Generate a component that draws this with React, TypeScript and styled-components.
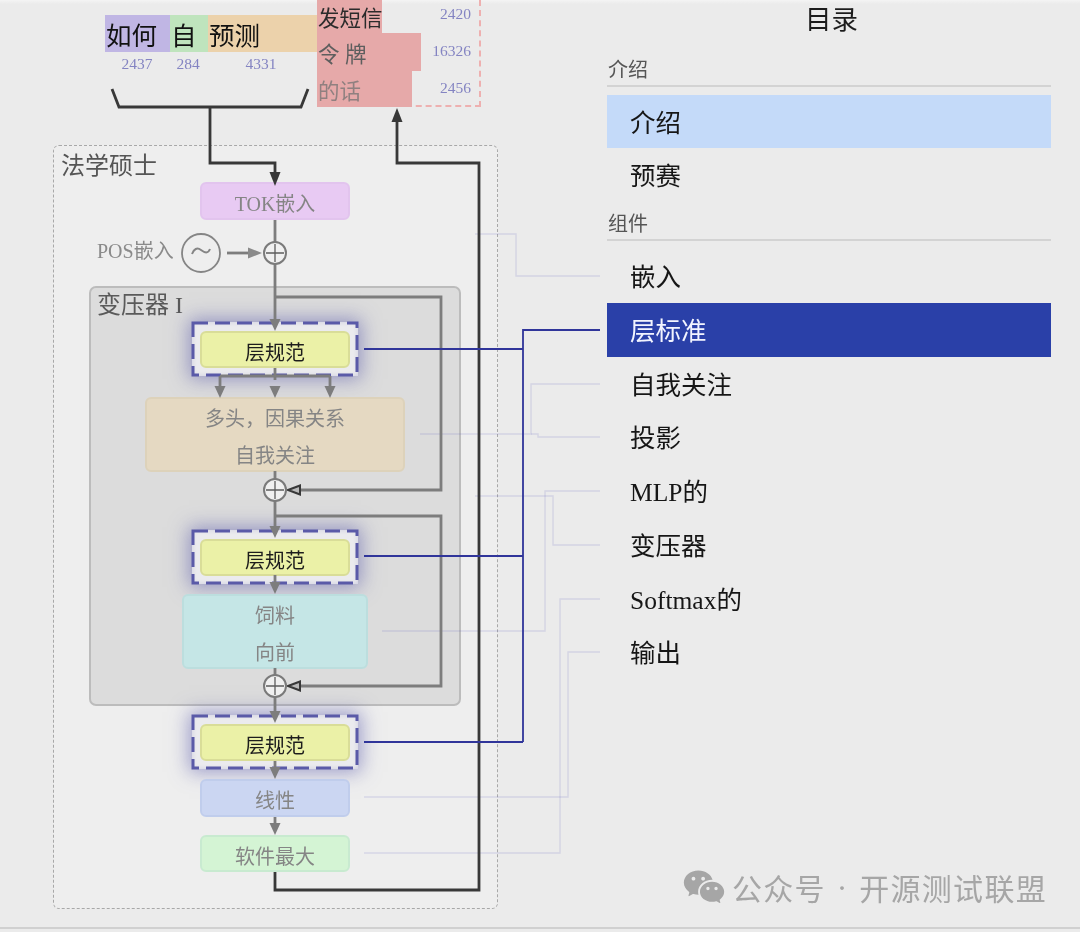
import React from "react";
import styled, { createGlobalStyle } from "styled-components";
import { RiWechatFill } from "react-icons/ri";

const SERIF = `"Liberation Serif", "Noto Sans CJK SC", serif`;

const Global = createGlobalStyle`
  html, body { margin: 0; padding: 0; background: #ebebeb; }
  #root { width: 1080px; height: 932px; overflow: hidden; }
`;

const Page = styled.div`
  position: relative;
  display: flex;
  width: 1080px;
  height: 932px;
  box-sizing: border-box;
  background: #ebebeb;
  font-family: ${SERIF};
  overflow: hidden;
  filter: blur(0.5px);

  &::before {
    content: "";
    position: absolute;
    left: 0;
    right: 0;
    top: 0;
    height: 4px;
    background: linear-gradient(#f4f4f4, #ebebeb);
  }

  &::after {
    content: "";
    position: absolute;
    left: 0;
    right: 0;
    top: 927px;
    height: 2px;
    background: #d0d0d0;
  }
`;

const Canvas = styled.div`
  position: relative;
  flex: 0 0 607px;
  height: 928px;
`;

const Frame = styled.div<{ $x: number; $y: number; $w: number; $h: number }>`
  position: absolute;
  left: ${(p) => p.$x}px;
  top: ${(p) => p.$y}px;
  width: ${(p) => p.$w}px;
  height: ${(p) => p.$h}px;
  box-sizing: border-box;
`;

const LlmFrame = styled(Frame)`
  background: #eeeeee;
  border: 1px dashed #a8a8a8;
  border-radius: 6px;
  padding: 6px 7px;
  font-size: 24px;
  line-height: 29px;
  color: #555;
`;

const TransformerFrame = styled(Frame)`
  background: #dcdcdc;
  border: 2px solid #bcbcbc;
  border-radius: 7px;
  padding: 2px 6px;
  font-size: 24px;
  line-height: 30px;
  color: #5a5a5a;
`;

const Glow = styled(Frame)`
  background: #ebebee;
  box-shadow: 0 0 18px 3px rgba(85, 85, 170, 0.55), inset 0 0 5px rgba(85, 85, 170, 0.2);
`;

const Block = styled(Frame)<{ $bg: string; $line: string; $ink?: string }>`
  display: flex;
  flex-direction: column;
  align-items: center;
  justify-content: center;
  padding-top: 7px;
  background: ${(p) => p.$bg};
  border: 2px solid ${(p) => p.$line};
  border-radius: 6px;
  color: ${(p) => p.$ink ?? "#858585"};
  font-size: 20px;
  line-height: 37px;
`;

const TokenRow = styled.div`
  position: absolute;
  left: 105px;
  top: 15px;
  display: flex;
`;

const Token = styled.div<{ $w: number; $bg: string }>`
  width: ${(p) => p.$w}px;
  height: 37px;
  padding: 4px 0 0 1px;
  box-sizing: border-box;
  background: ${(p) => p.$bg};
  color: #111;
  font-size: 25.5px;
  line-height: 36px;
  white-space: nowrap;
`;

const TokenCount = styled.div<{ $x: number }>`
  position: absolute;
  left: ${(p) => p.$x - 30}px;
  top: 55px;
  width: 60px;
  text-align: center;
  font-size: 15.5px;
  line-height: 18px;
  color: #8484c2;
`;

const Output = styled.div`
  position: absolute;
  left: 317px;
  top: 0;
  width: 164px;
  height: 107px;
  box-sizing: border-box;
  border-right: 2px dashed #eeb0b0;
  border-bottom: 2px dashed #eeb0b0;
  display: flex;
  flex-direction: column;
`;

const OutputRow = styled.div<{ $h: number; $w: number; $ink: string }>`
  position: relative;
  flex: none;
  height: ${(p) => p.$h}px;
  width: ${(p) => p.$w}px;
  padding-left: 1px;
  box-sizing: border-box;
  background: #e6a9a9;
  color: ${(p) => p.$ink};
  font-size: 21.5px;
  line-height: ${(p) => p.$h + 6}px;
  white-space: nowrap;
`;

const OutputCount = styled.span<{ $top: number }>`
  position: absolute;
  top: ${(p) => p.$top}px;
  left: 94px;
  width: 60px;
  text-align: right;
  font-size: 15.5px;
  line-height: 18px;
  color: #8484c2;
`;

const PosLabel = styled.div`
  position: absolute;
  left: 97px;
  top: 238px;
  font-size: 20px;
  line-height: 26px;
  color: #8a8a8a;
  white-space: nowrap;
`;

const Wires = styled.svg`
  position: absolute;
  left: 0;
  top: 0;
  pointer-events: none;
`;

const Sidebar = styled.nav`
  flex: 0 0 444px;
  display: flex;
  flex-direction: column;
`;

const Title = styled.div`
  height: 38px;
  text-align: center;
  margin-left: 5px;
  font-size: 26.5px;
  line-height: 41px;
  color: #1c1c1c;
`;

const Section = styled.div<{ $gap: number }>`
  height: 36px;
  margin-top: ${(p) => p.$gap}px;
  box-sizing: border-box;
  padding-left: 1px;
  border-bottom: 2px solid #d3d3d3;
  font-size: 20px;
  line-height: 39px;
  color: #555;
`;

const Items = styled.ul`
  list-style: none;
  margin: 8px 0 0;
  padding: 0;
  display: flex;
  flex-direction: column;
`;

const Item = styled.li<{ $state?: "soft" | "active" }>`
  height: 53.7px;
  padding-left: 23px;
  box-sizing: border-box;
  font-size: 25.5px;
  line-height: 57px;
  white-space: nowrap;
  color: ${(p) => (p.$state === "active" ? "#f2f4ff" : "#161616")};
  background: ${(p) =>
    p.$state === "active" ? "#2a40a8" : p.$state === "soft" ? "#c4daf9" : "transparent"};
`;

const Watermark = styled.div`
  position: absolute;
  left: 682px;
  top: 865px;
  display: flex;
  align-items: center;
  gap: 6px;
  color: #a6a6a6;
  font-family: "Noto Sans CJK SC", sans-serif;
  font-size: 30px;
  line-height: 44px;
  letter-spacing: 1.3px;
  white-space: nowrap;
`;

const WatermarkDot = styled.span`
  font-size: 18px;
  margin: 0 1px;
`;

const GRAY = "#7d7d7d";
const DARK = "#383838";
const BLUE = "#30359a";
const FAINT = "rgba(100, 100, 190, 0.17)";

const normY = [322, 530, 715];

const faint = [
  "M475 234H516V276H600",
  "M420 434H531V384H600",
  "M531 434H538V437H600",
  "M475 496H553V545H600",
  "M382 631H545V491H600",
  "M364 853H560V599H600",
  "M364 797H568V652H600",
];

const gray = [
  "M275 220V242", "M275 264V326", "M275 368V380", "M220 376H330", "M220 376V388", "M330 376V388",
  "M275 471V479", "M275 501V534", "M275 575V586", "M275 668V675", "M275 697V718", "M275 761V772",
  "M275 817V828", "M227 253H255",
];

const loops = [
  "M275 297H441V490H300",
  "M275 516H441V686H300",
];

const down = (x: number, tip: number, w = 5.5, h = 12) => `${x - w},${tip - h} ${x + w},${tip - h} ${x},${tip}`;

const Diagram = () => (
  <Canvas>
    <TokenRow>
      <Token $w={65} $bg="#c0b6e4">如何</Token>
      <Token $w={38} $bg="#bfe4bd">自</Token>
      <Token $w={109} $bg="#ecd2ab">预测</Token>
    </TokenRow>
    <TokenCount $x={137}>2437</TokenCount>
    <TokenCount $x={188}>284</TokenCount>
    <TokenCount $x={261}>4331</TokenCount>

    <Output>
      <OutputRow $h={33} $w={65} $ink="#2b2b2b">
        发短信<OutputCount $top={5}>2420</OutputCount>
      </OutputRow>
      <OutputRow $h={38} $w={104} $ink="#5e5e5e">
        令 牌<OutputCount $top={9}>16326</OutputCount>
      </OutputRow>
      <OutputRow $h={36} $w={95} $ink="#908080">
        的话<OutputCount $top={8}>2456</OutputCount>
      </OutputRow>
    </Output>

    <LlmFrame $x={53} $y={145} $w={445} $h={764}>法学硕士</LlmFrame>
    <Block $x={200} $y={182} $w={150} $h={38} $bg="#e8caf3" $line="#e2c4ee">TOK嵌入</Block>
    <PosLabel>POS嵌入</PosLabel>
    <TransformerFrame $x={89} $y={286} $w={372} $h={420}>变压器 I</TransformerFrame>

    {normY.map((y) => (
      <React.Fragment key={y}>
        <Glow $x={192} $y={y} $w={166} $h={54} />
        <Block $x={200} $y={y + 9} $w={150} $h={37} $bg="#ebf1a7" $line="#d9dd98" $ink="#1d1d1d">层规范</Block>
      </React.Fragment>
    ))}

    <Block $x={145} $y={397} $w={260} $h={75} $bg="#e5d9c2" $line="#ddd2ba">
      <span>多头，因果关系</span>
      <span>自我关注</span>
    </Block>
    <Block $x={182} $y={594} $w={186} $h={75} $bg="#c5e6e6" $line="#bcdede">
      <span>饲料</span>
      <span>向前</span>
    </Block>
    <Block $x={200} $y={779} $w={150} $h={38} $bg="#cbd6f2" $line="#c0cdec">线性</Block>
    <Block $x={200} $y={835} $w={150} $h={37} $bg="#d4f4d4" $line="#c8ead0">软件最大</Block>

    <Wires width={607} height={928} viewBox="0 0 607 928" fill="none">
      {faint.map((d) => <path key={d} d={d} stroke={FAINT} strokeWidth={1.4} />)}

      {normY.map((y) => (
        <rect key={y} x={193} y={y + 1} width={164} height={52} stroke="#5a5aa8" strokeWidth={3} strokeDasharray="15 7" />
      ))}

      <path d="M112 89L119 107H301L308 89" stroke={DARK} strokeWidth={2.8} />
      <path d="M210 107V163H275V175" stroke={DARK} strokeWidth={2.8} />
      <polygon points={down(275, 186, 5.5, 14)} fill={DARK} />
      <path d="M275 872V890H479V163H397V118" stroke={DARK} strokeWidth={2.8} />
      <polygon points="397,108 391.500,122 402.500,122" fill={DARK} />

      {gray.map((d) => <path key={d} d={d} stroke={GRAY} strokeWidth={2.8} />)}
      {[[275, 331], [220, 398], [275, 398], [330, 398], [275, 538], [275, 594], [275, 723], [275, 779], [275, 835]].map(([x, t]) => (
        <polygon key={`${x}-${t}`} points={down(x, t)} fill={GRAY} />
      ))}
      <polygon points="262,253 248,247.500 248,258.500" fill="#8a8a8a" />

      {loops.map((d) => <path key={d} d={d} stroke={GRAY} strokeWidth={2.8} />)}
      {[490, 686].map((y) => (
        <polygon key={y} points={`288,${y} 300,${y - 4.5} 300,${y + 4.5}`} fill="#b8b8b8" stroke={DARK} strokeWidth={2} />
      ))}

      <circle cx={201} cy={253} r={19} stroke="#858585" strokeWidth={1.8} />
      <path d="M192 254c2-5 5-7 9-4s7 4 9-1" stroke="#858585" strokeWidth={2} />

      {[253, 490, 686].map((y) => (
        <g key={y}>
          <circle cx={275} cy={y} r={11} fill="#f0f0f0" stroke="#7a7a7a" strokeWidth={2} />
          <path d={`M266 ${y}H284M275 ${y - 9}V${y + 9}`} stroke="#5c5c5c" strokeWidth={1.3} />
        </g>
      ))}

      <path d="M364 349H523M364 556H523M364 742H523M523 742V330H600" stroke={BLUE} strokeWidth={1.8} />
    </Wires>
  </Canvas>
);

const Toc = () => (
  <Sidebar>
    <Title>目录</Title>
    <Section $gap={12.5}>介绍</Section>
    <Items>
      <Item $state="soft">介绍</Item>
      <Item>预赛</Item>
    </Items>
    <Section $gap={3.5}>组件</Section>
    <Items>
      <Item>嵌入</Item>
      <Item $state="active">层标准</Item>
      <Item>自我关注</Item>
      <Item>投影</Item>
      <Item>MLP的</Item>
      <Item>变压器</Item>
      <Item>Softmax的</Item>
      <Item>输出</Item>
    </Items>
  </Sidebar>
);

export default function App() {
  return (
    <Page>
      <Global />
      <Diagram />
      <Toc />
      <Watermark>
        <RiWechatFill size={44} />
        <span>公众号</span>
        <WatermarkDot>·</WatermarkDot>
        <span>开源测试联盟</span>
      </Watermark>
    </Page>
  );
}
